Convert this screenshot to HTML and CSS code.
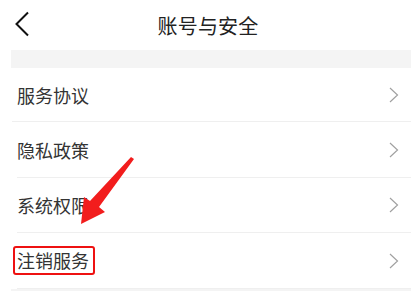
FILE: index.html
```html
<!DOCTYPE html>
<html lang="zh">
<head>
<meta charset="utf-8">
<link rel="stylesheet" href="styles.css">
</head>
<body>
<div class="page">
  <header class="topbar">
    <svg class="back" width="16" height="26" viewBox="0 0 16 26"><path d="M14 1.5 L2.5 13 L14 24.5" fill="none" stroke="#111" stroke-width="2"/></svg>
    <h1 class="title">账号与安全</h1>
  </header>
  <div class="band"></div>
  <ul class="list">
    <li class="row first"><span class="label">服务协议</span><svg class="chev" width="10" height="16" viewBox="0 0 10 16"><path d="M1 1 L8.5 8 L1 15" fill="none" stroke="#a0a0a0" stroke-width="1.2"/></svg></li>
    <li class="row second"><span class="label">隐私政策</span><svg class="chev" width="10" height="16" viewBox="0 0 10 16"><path d="M1 1 L8.5 8 L1 15" fill="none" stroke="#a0a0a0" stroke-width="1.2"/></svg></li>
    <li class="row"><span class="label">系统权限</span><svg class="chev" width="10" height="16" viewBox="0 0 10 16"><path d="M1 1 L8.5 8 L1 15" fill="none" stroke="#a0a0a0" stroke-width="1.2"/></svg></li>
    <li class="row last"><span class="label boxed">注销服务</span><svg class="chev" width="10" height="16" viewBox="0 0 10 16"><path d="M1 1 L8.5 8 L1 15" fill="none" stroke="#a0a0a0" stroke-width="1.2"/></svg></li>
  </ul>
  <div class="band bottom"></div>
  <svg class="arrow" width="411" height="291" viewBox="0 0 411 291"><path d="M134 159 L99 207 L105 212 L81 224 L84 197 L90 201 L131 157 Z" fill="#f21d1d"/></svg>
</div>
</body>
</html>
```
FILE: styles.css
```css
* { box-sizing: border-box; }
html, body { margin: 0; padding: 0; background: #fff; }
body { font-family: "Noto Sans CJK SC", "Noto Sans", sans-serif; color: #333; }
.page { position: relative; width: 411px; height: 291px; overflow: hidden; }
.topbar { height: 50px; display: flex; align-items: center; justify-content: center; position: relative; padding-left: 5px; }
.back { position: absolute; left: 14px; top: 11px; }
.title { margin: 0; font-size: 20px; font-weight: 400; color: #222; letter-spacing: 0.2px; }
.band { height: 18px; margin-left: 11px; background: #f4f4f4; }
.band.bottom { height: 4px; }
.list { list-style: none; margin: 0; padding: 0 0 0 11px; }
.row { height: 55px; display: flex; align-items: center; justify-content: space-between; padding: 0 12px 0 0; border-bottom: 1px solid #efefef; margin-left: 6px; }
.row.first { margin-left: 1px; padding-left: 5px; height: 54px; }
.row.second { height: 56px; }
.row.last { height: 56px; }
.label { font-size: 18px; line-height: 24px; color: #333; }
.chev { display: block; }
.boxed { line-height: 23px; border: 2px solid #ee1111; border-radius: 3px; padding: 1px 4px 1px 2px; margin-left: -4px; }
.arrow { position: absolute; left: 0; top: 0; pointer-events: none; }
```
